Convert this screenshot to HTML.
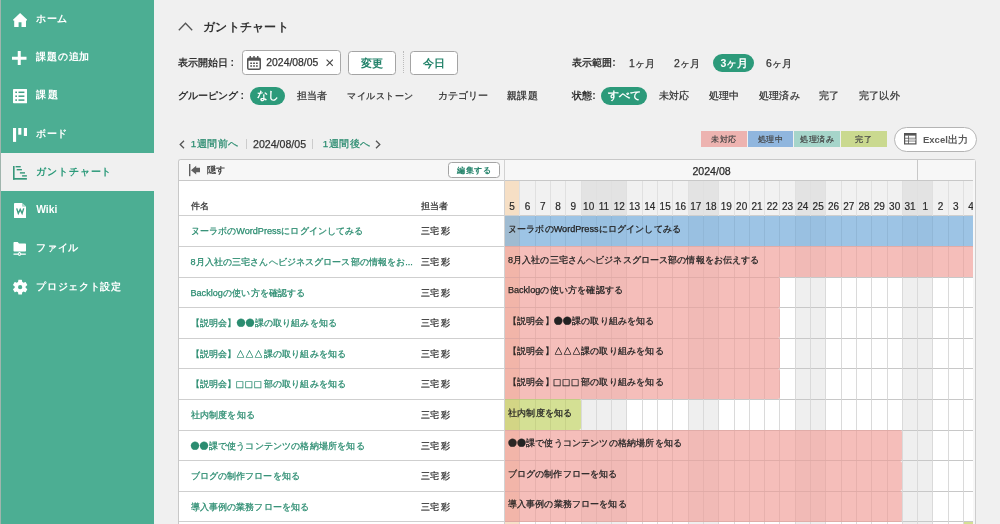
<!DOCTYPE html>
<html lang="ja">
<head>
<meta charset="utf-8">
<title>ガントチャート</title>
<style>
html,body{margin:0;padding:0}
body{width:1000px;height:524px;overflow:hidden;background:#f0f0f0;font-family:"Liberation Sans",sans-serif;position:relative;color:#333;font-size:10px}
div,span,svg{position:absolute;box-sizing:border-box}
#app{left:0;top:0;width:1000px;height:524px;overflow:hidden;will-change:transform}
.t{white-space:nowrap;line-height:20px;height:20px;-webkit-text-stroke:.25px}
.b{font-weight:bold;-webkit-text-stroke:0}
.j{text-align:justify;text-align-last:justify}
#side{left:1px;top:0;width:153px;height:524px;background:#4cae93}
#strip{left:0;top:0;width:1px;height:524px;background:#9fb5ad}
.ni{left:0;width:153px;height:38.25px}
.ni .t{left:35.2px;top:8.9px;color:#fff;font-weight:bold;font-size:10.3px;-webkit-text-stroke:0}
.ni.act{background:#f0f0f0}
.ni.act .t{color:#2c9a7a}
.pill{background:#2c9a7a;color:#fff;border-radius:9px;text-align:justify;text-align-last:justify;font-weight:bold;font-size:10.5px;white-space:nowrap;overflow:hidden}
.btn{background:#fff;border:1px solid #a4a4a4;border-radius:3.5px;text-align:justify;text-align-last:justify;color:#23836a;font-weight:bold;white-space:nowrap;overflow:hidden}
.lg{-webkit-text-stroke:.2px;top:131px;height:15.5px;font-size:8.1px;text-align:justify;text-align-last:justify;line-height:17.5px;color:#444;white-space:nowrap;overflow:hidden}
.row{left:0;width:326px;height:30.6px;border-top:1px solid #cfcfcf}
.row .n{left:11.5px;top:5.2px;color:#2b8c70;font-size:9.1px}
.row .a{left:241.5px;top:5.2px;font-size:9.1px;color:#333;width:30px}
.bar{height:30.5px;border-radius:0 2px 2px 0;overflow:hidden}
.bar .t{left:3.4px;font-size:9.1px;color:#222}
i.w{font-style:normal;display:inline-block;width:9px;text-align:center;line-height:0}
i.d{font-size:19px;vertical-align:-2px;display:inline-flex;justify-content:center}
i.q{font-size:11px;vertical-align:-.6px}
.dn{font-size:10px;text-align:center;color:#2a2a2a;-webkit-text-stroke:.2px;line-height:20px;height:20px}
</style>
</head>
<body>
<div id="app">
<div id="strip"></div>
<div id="side">
<div class="ni" style="top:0px"><svg style="left:11.800px;top:12.850px" width="14.200" height="14.150" viewBox="0 0 28.400 28.300"><path fill="#fff" d="M14.200 0L0 13.400V15H2.400V28.300H11.200V18.300H17V28.300H26V15H28.400V13.400Z"/></svg><span class="t j" style="width:31.3px">ホーム</span></div>
<div class="ni" style="top:38.25px"><svg style="left:11.2px;top:12.40px" width="14.5" height="14.5" viewBox="0 0 29 29"><path fill="#fff" d="M11.5 0h6v11.5h11.5v6h-11.5v11.5h-6v-11.5h-11.5v-6h11.5z"/></svg><span class="t j" style="width:53.1px">課題の追加</span></div>
<div class="ni" style="top:76.5px"><svg style="left:11.900px;top:12.90px" width="14.200" height="14.200" viewBox="0 0 28.400 28.400"><rect x="0" y="0" width="28.400" height="28.400" rx="1.600" fill="#fff"/><g fill="#3f9f84"><rect x="4.600" y="5.100" width="3.400" height="3"/><rect x="11" y="5.100" width="11.800" height="3"/><rect x="4.600" y="12.900" width="3.400" height="3"/><rect x="11" y="12.900" width="11.800" height="3"/><rect x="4.600" y="20.700" width="3.400" height="3"/><rect x="11" y="20.700" width="11.800" height="3"/></g></svg><span class="t j" style="width:21.6px">課題</span></div>
<div class="ni" style="top:114.75px"><svg style="left:11.900px;top:13.20px" width="14.500" height="14" viewBox="0 0 29 28"><g fill="#fff"><rect x="0" y="0" width="6.200" height="27.800"/><rect x="10.500" y="0" width="6.200" height="13.400"/><rect x="21.700" y="0" width="6.400" height="16"/></g></svg><span class="t j" style="width:31.3px">ボード</span></div>
<div class="ni act" style="top:153px"><svg style="left:12.100px;top:13.00px" width="13.900" height="13.700" viewBox="0 0 139 137"><g fill="#35977a"><rect x="0" y="0" width="16" height="137"/><rect x="0" y="120" width="139" height="17"/><rect x="26" y="0" width="51" height="14"/><rect x="37" y="30" width="52" height="14"/><rect x="69" y="62" width="51" height="14"/><rect x="91" y="92" width="48" height="14"/></g></svg><span class="t j" style="width:75.2px">ガントチャート</span></div>
<div class="ni" style="top:191.25px"><svg style="left:12.800px;top:11.45px" width="12.300" height="15.200" viewBox="0 0 123 152"><path fill="#fff" d="M8 0H80L123 38V144a8 8 0 0 1-8 8H8a8 8 0 0 1-8-8V8a8 8 0 0 1 8-8z"/><path fill="#4cae93" d="M80 0V30a8 8 0 0 0 8 8H123z" opacity=".45"/><path fill="none" stroke="#3f9f84" stroke-width="14" stroke-linejoin="miter" d="M27 54L43 104L62 64L81 104L97 54"/></svg><span class="t">Wiki</span></div>
<div class="ni" style="top:229.5px"><svg style="left:12.4px;top:12.80px" width="13" height="14" viewBox="0 0 26 28"><g fill="#fff"><path d="M1 1.5a1.5 1.5 0 0 1 1.500-1.500h7l2.500 3h12.500a1.500 1.500 0 0 1 1.500 1.500v13a1.500 1.500 0 0 1-1.500 1.500h-22a1.500 1.500 0 0 1-1.500-1.500z"/><rect x="1" y="23" width="24.600" height="2.600"/><rect x="11.800" y="20" width="2.400" height="4"/><circle cx="13" cy="24.200" r="3.600"/></g><circle cx="13" cy="24.200" r="1.500" fill="#4cae93"/></svg><span class="t j" style="width:42px">ファイル</span></div>
<div class="ni" style="top:267.75px"><svg style="left:9.600px;top:10.60px" width="18.300" height="18.300" viewBox="0 0 24 24"><path fill="#fff" d="M19.140 12.940c.040-.300.060-.610.060-.940 0-.320-.020-.640-.070-.940l2.030-1.580a.490.490 0 0 0 .120-.610l-1.920-3.320a.488.488 0 0 0-.590-.220l-2.390.960c-.500-.380-1.030-.700-1.620-.940l-.360-2.540a.484.484 0 0 0-.480-.410h-3.840c-.240 0-.430.170-.470.410l-.360 2.540c-.590.240-1.130.570-1.620.940l-2.390-.960c-.220-.080-.470 0-.590.220L2.740 8.870c-.120.210-.08.470.120.610l2.030 1.580c-.050.300-.090.630-.090.940s.2.640.07.940l-2.030 1.580a.490.490 0 0 0-.120.610l1.920 3.320c.12.220.37.290.59.220l2.390-.960c.500.380 1.030.700 1.620.940l.360 2.540c.5.240.24.410.48.410h3.840c.24 0 .44-.170.470-.410l.360-2.540c.590-.240 1.130-.560 1.620-.940l2.390.960c.22.080.47 0 .59-.220l1.920-3.320c.12-.220.070-.470-.120-.610l-2.010-1.580zM12 14.800a2.800 2.800 0 1 1 0-5.600a2.800 2.800 0 0 1 0 5.600z"/></svg><span class="t j" style="width:84.8px">プロジェクト設定</span></div>
</div>
<svg style="left:178px;top:21.5px" width="15" height="9" viewBox="0 0 15 9"><path d="M0.800 8.200L7.500 1.200L14.200 8.200" fill="none" stroke="#555" stroke-width="1.300"/></svg>
<span class="t b j" style="left:203.2px;top:16.5px;width:85.5px;font-size:12.1px;color:#333;">ガントチャート</span>
<span class="t b j" style="left:177.7px;top:53px;width:56px;font-size:10.4px;color:#333;">表示開始日 :</span>
<div style="left:241.500px;top:50px;width:99px;height:24.500px;background:#fff;border:1px solid #a8a8a8;border-radius:3.500px"></div>
<svg style="left:247px;top:55.500px" width="14" height="14" viewBox="0 0 28 28"><g fill="#555"><rect x="5" y="0" width="3" height="6"/><rect x="12.500" y="0" width="3" height="6"/><rect x="20" y="0" width="3" height="6"/></g><rect x="1.500" y="4.500" width="25" height="22" rx="2.500" fill="none" stroke="#555" stroke-width="3"/><rect x="1.500" y="4.500" width="25" height="5" fill="#555"/><g fill="#555"><rect x="6.500" y="13" width="3.600" height="3"/><rect x="12.200" y="13" width="3.600" height="3"/><rect x="17.900" y="13" width="3.600" height="3"/><rect x="6.500" y="18.500" width="3.600" height="3"/><rect x="12.200" y="18.500" width="3.600" height="3"/><rect x="17.900" y="18.500" width="3.600" height="3"/></g></svg>
<span class="t" style="left:266.3px;top:53px;font-size:10.4px;color:#333;">2024/08/05</span>
<svg style="left:326px;top:59.300px" width="7.400" height="7.400" viewBox="0 0 10 10"><path d="M0.800 0.800L9.200 9.200M9.200 0.800L0.800 9.200" stroke="#444" stroke-width="1.500" fill="none"/></svg>
<div class="btn" style="left:348px;top:50.500px;width:47.500px;height:24px;line-height:22px;font-size:10.600px;padding:0 11.600px">変更</div>
<div style="left:402.500px;top:51px;width:0;height:22px;border-left:1px dotted #bbb"></div>
<div class="btn" style="left:410px;top:50.500px;width:47.500px;height:24px;line-height:22px;font-size:10.600px;padding:0 11.600px">今日</div>
<span class="t b j" style="left:572.3px;top:53px;width:43.2px;font-size:10.4px;color:#333;">表示範囲:</span>
<span class="t j" style="left:629px;top:53.8px;width:25px;font-size:10.4px;color:#333;">1ヶ月</span>
<span class="t j" style="left:674px;top:53.8px;width:26px;font-size:10.4px;color:#333;">2ヶ月</span>
<div class="pill" style="left:712.700px;top:54px;width:41.500px;height:18px;line-height:18px;padding:0 7.800px">3ヶ月</div>
<span class="t j" style="left:766px;top:53.8px;width:26px;font-size:10.4px;color:#333;">6ヶ月</span>
<span class="t b j" style="left:177.7px;top:85.5px;width:65px;font-size:10.4px;color:#333;">グルーピング :</span>
<div class="pill" style="left:249.500px;top:87px;width:35px;height:17.500px;line-height:17.500px;padding:0 7.300px">なし</div>
<span class="t j" style="left:297px;top:85.5px;width:29.6px;font-size:10px;color:#333;">担当者</span>
<span class="t j" style="left:347.3px;top:85.5px;width:66.2px;font-size:9.4px;color:#333;">マイルストーン</span>
<span class="t j" style="left:437.5px;top:85.5px;width:49px;font-size:9.6px;color:#333;">カテゴリー</span>
<span class="t j" style="left:506.5px;top:85.5px;width:31px;font-size:10px;color:#333;">親課題</span>
<span class="t b j" style="left:572.3px;top:85.5px;width:23.2px;font-size:10.4px;color:#333;">状態:</span>
<div class="pill" style="left:601px;top:87px;width:46px;height:17.500px;line-height:17.500px;padding:0 7.300px">すべて</div>
<span class="t j" style="left:658.8px;top:85.5px;width:30.6px;font-size:10px;color:#333;">未対応</span>
<span class="t j" style="left:708.6px;top:85.5px;width:30.6px;font-size:10px;color:#333;">処理中</span>
<span class="t j" style="left:759px;top:85.5px;width:40.6px;font-size:10px;color:#333;">処理済み</span>
<span class="t j" style="left:819.2px;top:85.5px;width:19.6px;font-size:10px;color:#333;">完了</span>
<span class="t j" style="left:859.2px;top:85.5px;width:40.4px;font-size:10px;color:#333;">完了以外</span>
<svg style="left:178.500px;top:140px" width="6" height="9" viewBox="0 0 6 9"><path d="M5 0.800L1.200 4.500L5 8.200" fill="none" stroke="#555" stroke-width="1.300"/></svg>
<span class="t j" style="left:190.7px;top:134px;width:47.6px;font-size:9.8px;color:#2b8c70;">1週間前へ</span>
<div style="left:245.500px;top:139px;width:1px;height:10px;background:#ccc"></div>
<span class="t" style="left:253px;top:134px;font-size:10.6px;color:#333;">2024/08/05</span>
<div style="left:311.500px;top:139px;width:1px;height:10px;background:#ccc"></div>
<span class="t j" style="left:322.7px;top:134px;width:47.6px;font-size:9.8px;color:#2b8c70;">1週間後へ</span>
<svg style="left:374.500px;top:140px" width="6" height="9" viewBox="0 0 6 9"><path d="M1 0.800L4.800 4.500L1 8.200" fill="none" stroke="#555" stroke-width="1.300"/></svg>
<div class="lg" style="left:700.5px;width:46px;background:#edb3b0;padding:0 10.3px">未対応</div>
<div class="lg" style="left:747.5px;width:45.5px;background:#90b6de;padding:0 10px">処理中</div>
<div class="lg" style="left:794px;width:46px;background:#a6d5ca;padding:0 6.2px">処理済み</div>
<div class="lg" style="left:841px;width:45.5px;background:#cad98f;padding:0 14.4px">完了</div>
<div style="left:894px;top:127px;width:82.500px;height:24.500px;background:#fff;border:1px solid #b4b4b4;border-radius:12.500px"></div>
<svg style="left:904px;top:133px" width="12.500" height="11.500" viewBox="0 0 25 23"><rect x="1.200" y="1.200" width="22.600" height="20.600" fill="#fff" stroke="#555" stroke-width="2.400"/><rect x="1.200" y="1.200" width="22.600" height="4" fill="#555"/><path d="M1 10.500h23M1 16h23M9 5v17" stroke="#555" stroke-width="1.600" fill="none"/><rect x="9.800" y="11.300" width="13" height="4" fill="#ccc"/></svg>
<span class="t b j" style="left:923px;top:129.5px;width:43.5px;font-size:9.5px;color:#5a5a5a;">Excel出力</span>
<div id="lt" style="left:178px;top:159px;width:326.5px;height:380px;background:#fff;border:1px solid #c8c8c8;border-right:none;border-radius:3px 0 0 0;overflow:hidden">
<div style="left:0;top:0;width:326px;height:21px;background:#f7f7f7;border-bottom:1px solid #c8c8c8"></div>
<svg style="left:9.8px;top:4.4px" width="11.2" height="12.2" viewBox="0 0 112 122"><rect x="0" y="0" width="14" height="122" fill="#606060"/><path d="M20 62L72 17.6V37.6H112V83H72V104Z" fill="#606060"/></svg>
<span class="t j" style="left:28.3px;top:-0.2px;width:18px;font-size:9px;color:#333">隠す</span>
<div class="btn" style="left:269px;top:2px;width:52px;height:16px;line-height:14px;font-size:8.300px;padding:0 8.200px">編集する</div>
<span class="t j" style="left:11.5px;top:36.3px;width:18px;font-size:9.100px;color:#333">件名</span>
<span class="t j" style="left:241.5px;top:36.3px;width:27px;font-size:9.100px;color:#333">担当者</span>
<div class="row" style="top:55.3px"><span class="t n j" style="width:173px">ヌーラボのWordPressにログインしてみる</span><span class="t a j">三宅 彩</span></div>
<div class="row" style="top:85.9px"><span class="t n j" style="width:222.3px">8月入社の三宅さんへビジネスグロース部の情報をお...</span><span class="t a j">三宅 彩</span></div>
<div class="row" style="top:116.5px"><span class="t n j" style="width:115px">Backlogの使い方を確認する</span><span class="t a j">三宅 彩</span></div>
<div class="row" style="top:147.1px"><span class="t n j" style="width:146.5px">【説明会】<i class="w d">●</i><i class="w d">●</i>課の取り組みを知る</span><span class="t a j">三宅 彩</span></div>
<div class="row" style="top:177.7px"><span class="t n j" style="width:155.7px">【説明会】<i class="w">△</i><i class="w">△</i><i class="w">△</i>課の取り組みを知る</span><span class="t a j">三宅 彩</span></div>
<div class="row" style="top:208.3px"><span class="t n j" style="width:155.7px">【説明会】<i class="w q">□</i><i class="w q">□</i><i class="w q">□</i>部の取り組みを知る</span><span class="t a j">三宅 彩</span></div>
<div class="row" style="top:238.9px"><span class="t n j" style="width:64.3px">社内制度を知る</span><span class="t a j">三宅 彩</span></div>
<div class="row" style="top:269.5px"><span class="t n j" style="width:174px"><i class="w d">●</i><i class="w d">●</i>課で使うコンテンツの格納場所を知る</span><span class="t a j">三宅 彩</span></div>
<div class="row" style="top:300.1px"><span class="t n j" style="width:109.3px">ブログの制作フローを知る</span><span class="t a j">三宅 彩</span></div>
<div class="row" style="top:330.7px"><span class="t n j" style="width:118.7px">導入事例の業務フローを知る</span><span class="t a j">三宅 彩</span></div>
<div class="row" style="top:361.3px"></div>
</div>
<div id="g" style="left:504.5px;top:159px;width:471.5px;height:380px;background:#fff;overflow:hidden;border-top:1px solid #c8c8c8;border-radius:0 3px 0 0">
<div style="left:0;top:0;width:471.5px;height:21px;background:#f7f7f7;border-bottom:1px solid #c8c8c8"></div>
<div style="left:412.6px;top:0;width:1px;height:20px;background:#c8c8c8"></div>
<span class="t" style="left:177.05px;top:0.5px;width:60px;text-align:center;font-size:10.600px;color:#2a2a2a">2024/08</span>
<div style="left:0px;top:21px;width:15.4px;height:34.8px;background:#f6dfc5"></div>
<div style="left:0px;top:55.8px;width:15.4px;height:340px;background:#f9e6d0"></div>
<span class="dn" style="left:-3px;top:37.1px;width:21.3px">5</span>
<div style="left:15.3px;top:21px;width:15.4px;height:34.8px;background:#f1f1f1"></div>
<span class="dn" style="left:12.3px;top:37.1px;width:21.3px">6</span>
<div style="left:30.6px;top:21px;width:15.4px;height:34.8px;background:#f1f1f1"></div>
<span class="dn" style="left:27.6px;top:37.1px;width:21.3px">7</span>
<div style="left:45.9px;top:21px;width:15.4px;height:34.8px;background:#f1f1f1"></div>
<span class="dn" style="left:42.9px;top:37.1px;width:21.3px">8</span>
<div style="left:61.2px;top:21px;width:15.4px;height:34.8px;background:#f1f1f1"></div>
<span class="dn" style="left:58.2px;top:37.1px;width:21.3px">9</span>
<div style="left:76.5px;top:21px;width:15.4px;height:34.8px;background:#e3e3e3"></div>
<div style="left:76.5px;top:55.8px;width:15.4px;height:340px;background:#efefef"></div>
<span class="dn" style="left:73.5px;top:37.1px;width:21.3px">10</span>
<div style="left:91.8px;top:21px;width:15.4px;height:34.8px;background:#e3e3e3"></div>
<div style="left:91.8px;top:55.8px;width:15.4px;height:340px;background:#efefef"></div>
<span class="dn" style="left:88.8px;top:37.1px;width:21.3px">11</span>
<div style="left:107.1px;top:21px;width:15.4px;height:34.8px;background:#e3e3e3"></div>
<div style="left:107.1px;top:55.8px;width:15.4px;height:340px;background:#efefef"></div>
<span class="dn" style="left:104.1px;top:37.1px;width:21.3px">12</span>
<div style="left:122.4px;top:21px;width:15.4px;height:34.8px;background:#f1f1f1"></div>
<span class="dn" style="left:119.4px;top:37.1px;width:21.3px">13</span>
<div style="left:137.7px;top:21px;width:15.4px;height:34.8px;background:#f1f1f1"></div>
<span class="dn" style="left:134.7px;top:37.1px;width:21.3px">14</span>
<div style="left:153px;top:21px;width:15.4px;height:34.8px;background:#f1f1f1"></div>
<span class="dn" style="left:150px;top:37.1px;width:21.3px">15</span>
<div style="left:168.3px;top:21px;width:15.4px;height:34.8px;background:#f1f1f1"></div>
<span class="dn" style="left:165.3px;top:37.1px;width:21.3px">16</span>
<div style="left:183.6px;top:21px;width:15.4px;height:34.8px;background:#e3e3e3"></div>
<div style="left:183.6px;top:55.8px;width:15.4px;height:340px;background:#efefef"></div>
<span class="dn" style="left:180.6px;top:37.1px;width:21.3px">17</span>
<div style="left:198.9px;top:21px;width:15.4px;height:34.8px;background:#e3e3e3"></div>
<div style="left:198.9px;top:55.8px;width:15.4px;height:340px;background:#efefef"></div>
<span class="dn" style="left:195.9px;top:37.1px;width:21.3px">18</span>
<div style="left:214.2px;top:21px;width:15.4px;height:34.8px;background:#f1f1f1"></div>
<span class="dn" style="left:211.2px;top:37.1px;width:21.3px">19</span>
<div style="left:229.5px;top:21px;width:15.4px;height:34.8px;background:#f1f1f1"></div>
<span class="dn" style="left:226.5px;top:37.1px;width:21.3px">20</span>
<div style="left:244.8px;top:21px;width:15.4px;height:34.8px;background:#f1f1f1"></div>
<span class="dn" style="left:241.8px;top:37.1px;width:21.3px">21</span>
<div style="left:260.1px;top:21px;width:15.4px;height:34.8px;background:#f1f1f1"></div>
<span class="dn" style="left:257.1px;top:37.1px;width:21.3px">22</span>
<div style="left:275.4px;top:21px;width:15.4px;height:34.8px;background:#f1f1f1"></div>
<span class="dn" style="left:272.4px;top:37.1px;width:21.3px">23</span>
<div style="left:290.7px;top:21px;width:15.4px;height:34.8px;background:#e3e3e3"></div>
<div style="left:290.7px;top:55.8px;width:15.4px;height:340px;background:#efefef"></div>
<span class="dn" style="left:287.7px;top:37.1px;width:21.3px">24</span>
<div style="left:306px;top:21px;width:15.4px;height:34.8px;background:#e3e3e3"></div>
<div style="left:306px;top:55.8px;width:15.4px;height:340px;background:#efefef"></div>
<span class="dn" style="left:303px;top:37.1px;width:21.3px">25</span>
<div style="left:321.3px;top:21px;width:15.4px;height:34.8px;background:#f1f1f1"></div>
<span class="dn" style="left:318.3px;top:37.1px;width:21.3px">26</span>
<div style="left:336.6px;top:21px;width:15.4px;height:34.8px;background:#f1f1f1"></div>
<span class="dn" style="left:333.6px;top:37.1px;width:21.3px">27</span>
<div style="left:351.9px;top:21px;width:15.4px;height:34.8px;background:#f1f1f1"></div>
<span class="dn" style="left:348.9px;top:37.1px;width:21.3px">28</span>
<div style="left:367.2px;top:21px;width:15.4px;height:34.8px;background:#f1f1f1"></div>
<span class="dn" style="left:364.2px;top:37.1px;width:21.3px">29</span>
<div style="left:382.5px;top:21px;width:15.4px;height:34.8px;background:#f1f1f1"></div>
<span class="dn" style="left:379.5px;top:37.1px;width:21.3px">30</span>
<div style="left:397.8px;top:21px;width:15.4px;height:34.8px;background:#e3e3e3"></div>
<div style="left:397.8px;top:55.8px;width:15.4px;height:340px;background:#efefef"></div>
<span class="dn" style="left:394.8px;top:37.1px;width:21.3px">31</span>
<div style="left:413.1px;top:21px;width:15.4px;height:34.8px;background:#e3e3e3"></div>
<div style="left:413.1px;top:55.8px;width:15.4px;height:340px;background:#efefef"></div>
<span class="dn" style="left:410.1px;top:37.1px;width:21.3px">1</span>
<div style="left:428.4px;top:21px;width:15.4px;height:34.8px;background:#f1f1f1"></div>
<span class="dn" style="left:425.4px;top:37.1px;width:21.3px">2</span>
<div style="left:443.7px;top:21px;width:15.4px;height:34.8px;background:#f1f1f1"></div>
<span class="dn" style="left:440.7px;top:37.1px;width:21.3px">3</span>
<div style="left:459px;top:21px;width:15.4px;height:34.8px;background:#f1f1f1"></div>
<span class="dn" style="left:456px;top:37.1px;width:21.3px">4</span>
<div style="left:0;top:55.3px;width:468.5px;height:1px;background:#cfcfcf"></div>
<div style="left:0;top:85.9px;width:468.5px;height:1px;background:#cfcfcf"></div>
<div style="left:0;top:116.5px;width:468.5px;height:1px;background:#cfcfcf"></div>
<div style="left:0;top:147.1px;width:468.5px;height:1px;background:#cfcfcf"></div>
<div style="left:0;top:177.7px;width:468.5px;height:1px;background:#cfcfcf"></div>
<div style="left:0;top:208.3px;width:468.5px;height:1px;background:#cfcfcf"></div>
<div style="left:0;top:238.9px;width:468.5px;height:1px;background:#cfcfcf"></div>
<div style="left:0;top:269.5px;width:468.5px;height:1px;background:#cfcfcf"></div>
<div style="left:0;top:300.1px;width:468.5px;height:1px;background:#cfcfcf"></div>
<div style="left:0;top:330.7px;width:468.5px;height:1px;background:#cfcfcf"></div>
<div style="left:0;top:361.3px;width:468.5px;height:1px;background:#cfcfcf"></div>
<div style="left:0;top:391.9px;width:468.5px;height:1px;background:#cfcfcf"></div>
<div style="left:14.8px;top:21px;width:1px;height:360px;background:#e0e0e0"></div>
<div style="left:30.1px;top:21px;width:1px;height:360px;background:#e0e0e0"></div>
<div style="left:45.4px;top:21px;width:1px;height:360px;background:#e0e0e0"></div>
<div style="left:60.7px;top:21px;width:1px;height:360px;background:#e0e0e0"></div>
<div style="left:76px;top:21px;width:1px;height:360px;background:#e0e0e0"></div>
<div style="left:91.3px;top:21px;width:1px;height:360px;background:#e0e0e0"></div>
<div style="left:106.6px;top:21px;width:1px;height:360px;background:#e0e0e0"></div>
<div style="left:121.9px;top:21px;width:1px;height:360px;background:#e0e0e0"></div>
<div style="left:137.2px;top:21px;width:1px;height:360px;background:#e0e0e0"></div>
<div style="left:152.5px;top:21px;width:1px;height:360px;background:#e0e0e0"></div>
<div style="left:167.8px;top:21px;width:1px;height:360px;background:#e0e0e0"></div>
<div style="left:183.1px;top:21px;width:1px;height:360px;background:#e0e0e0"></div>
<div style="left:198.4px;top:21px;width:1px;height:360px;background:#e0e0e0"></div>
<div style="left:213.7px;top:21px;width:1px;height:360px;background:#e0e0e0"></div>
<div style="left:229px;top:21px;width:1px;height:360px;background:#e0e0e0"></div>
<div style="left:244.3px;top:21px;width:1px;height:360px;background:#e0e0e0"></div>
<div style="left:259.6px;top:21px;width:1px;height:360px;background:#e0e0e0"></div>
<div style="left:274.9px;top:21px;width:1px;height:360px;background:#e0e0e0"></div>
<div style="left:290.2px;top:21px;width:1px;height:360px;background:#e0e0e0"></div>
<div style="left:305.5px;top:21px;width:1px;height:360px;background:#e0e0e0"></div>
<div style="left:320.8px;top:21px;width:1px;height:360px;background:#e0e0e0"></div>
<div style="left:336.1px;top:21px;width:1px;height:360px;background:#e0e0e0"></div>
<div style="left:351.4px;top:21px;width:1px;height:360px;background:#e0e0e0"></div>
<div style="left:366.7px;top:21px;width:1px;height:360px;background:#e0e0e0"></div>
<div style="left:382px;top:21px;width:1px;height:360px;background:#e0e0e0"></div>
<div style="left:397.3px;top:21px;width:1px;height:360px;background:#e0e0e0"></div>
<div style="left:412.6px;top:21px;width:1px;height:360px;background:#e0e0e0"></div>
<div style="left:427.9px;top:21px;width:1px;height:360px;background:#e0e0e0"></div>
<div style="left:443.2px;top:21px;width:1px;height:360px;background:#e0e0e0"></div>
<div style="left:458.5px;top:21px;width:1px;height:360px;background:#e0e0e0"></div>
<div class="bar" style="left:0;top:55.8px;width:474.3px;height:30.6px;background:rgba(124,176,220,.75)"><span class="t j" style="top:3.2px;width:173px">ヌーラボのWordPressにログインしてみる</span></div>
<div class="bar" style="left:0;top:86.4px;width:474.3px;height:30.6px;background:rgba(242,168,163,.75)"><span class="t j" style="top:3.2px;width:251.5px">8月入社の三宅さんへビジネスグロース部の情報をお伝えする</span></div>
<div class="bar" style="left:0;top:117px;width:275.4px;height:30.6px;background:rgba(242,168,163,.75)"><span class="t j" style="top:3.2px;width:115px">Backlogの使い方を確認する</span></div>
<div class="bar" style="left:0;top:147.6px;width:275.4px;height:30.6px;background:rgba(242,168,163,.75)"><span class="t j" style="top:3.2px;width:146.5px">【説明会】<i class="w d">●</i><i class="w d">●</i>課の取り組みを知る</span></div>
<div class="bar" style="left:0;top:178.2px;width:275.4px;height:30.6px;background:rgba(242,168,163,.75)"><span class="t j" style="top:3.2px;width:155.7px">【説明会】<i class="w">△</i><i class="w">△</i><i class="w">△</i>課の取り組みを知る</span></div>
<div class="bar" style="left:0;top:208.8px;width:275.4px;height:30.6px;background:rgba(242,168,163,.75)"><span class="t j" style="top:3.2px;width:155.7px">【説明会】<i class="w q">□</i><i class="w q">□</i><i class="w q">□</i>部の取り組みを知る</span></div>
<div class="bar" style="left:0;top:239.4px;width:76.5px;height:30.6px;background:rgba(197,213,112,.75)"><span class="t j" style="top:3.2px;width:64.3px">社内制度を知る</span></div>
<div class="bar" style="left:0;top:270px;width:397.8px;height:30.6px;background:rgba(242,168,163,.75)"><span class="t j" style="top:3.2px;width:174px"><i class="w d">●</i><i class="w d">●</i>課で使うコンテンツの格納場所を知る</span></div>
<div class="bar" style="left:0;top:300.6px;width:397.8px;height:30.6px;background:rgba(242,168,163,.75)"><span class="t j" style="top:3.2px;width:109.3px">ブログの制作フローを知る</span></div>
<div class="bar" style="left:0;top:331.2px;width:397.8px;height:30.6px;background:rgba(242,168,163,.75)"><span class="t j" style="top:3.2px;width:118.7px">導入事例の業務フローを知る</span></div>
<div class="bar" style="left:459px;top:362.3px;width:40px;background:rgba(197,213,112,.75)"></div>
<div style="left:0;top:55.8px;width:15.3px;height:340px;background:rgba(225,140,70,.05)"></div>
<div style="left:14.8px;top:55.8px;width:1px;height:320px;background:rgba(0,0,0,.025)"></div>
<div style="left:30.1px;top:55.8px;width:1px;height:320px;background:rgba(0,0,0,.025)"></div>
<div style="left:45.4px;top:55.8px;width:1px;height:320px;background:rgba(0,0,0,.025)"></div>
<div style="left:60.7px;top:55.8px;width:1px;height:320px;background:rgba(0,0,0,.025)"></div>
<div style="left:76px;top:55.8px;width:1px;height:320px;background:rgba(0,0,0,.025)"></div>
<div style="left:91.3px;top:55.8px;width:1px;height:320px;background:rgba(0,0,0,.025)"></div>
<div style="left:106.6px;top:55.8px;width:1px;height:320px;background:rgba(0,0,0,.025)"></div>
<div style="left:121.9px;top:55.8px;width:1px;height:320px;background:rgba(0,0,0,.025)"></div>
<div style="left:137.2px;top:55.8px;width:1px;height:320px;background:rgba(0,0,0,.025)"></div>
<div style="left:152.5px;top:55.8px;width:1px;height:320px;background:rgba(0,0,0,.025)"></div>
<div style="left:167.8px;top:55.8px;width:1px;height:320px;background:rgba(0,0,0,.025)"></div>
<div style="left:183.1px;top:55.8px;width:1px;height:320px;background:rgba(0,0,0,.025)"></div>
<div style="left:198.4px;top:55.8px;width:1px;height:320px;background:rgba(0,0,0,.025)"></div>
<div style="left:213.7px;top:55.8px;width:1px;height:320px;background:rgba(0,0,0,.025)"></div>
<div style="left:229px;top:55.8px;width:1px;height:320px;background:rgba(0,0,0,.025)"></div>
<div style="left:244.3px;top:55.8px;width:1px;height:320px;background:rgba(0,0,0,.025)"></div>
<div style="left:259.6px;top:55.8px;width:1px;height:320px;background:rgba(0,0,0,.025)"></div>
<div style="left:274.9px;top:55.8px;width:1px;height:320px;background:rgba(0,0,0,.025)"></div>
<div style="left:290.2px;top:55.8px;width:1px;height:320px;background:rgba(0,0,0,.025)"></div>
<div style="left:305.5px;top:55.8px;width:1px;height:320px;background:rgba(0,0,0,.025)"></div>
<div style="left:320.8px;top:55.8px;width:1px;height:320px;background:rgba(0,0,0,.025)"></div>
<div style="left:336.1px;top:55.8px;width:1px;height:320px;background:rgba(0,0,0,.025)"></div>
<div style="left:351.4px;top:55.8px;width:1px;height:320px;background:rgba(0,0,0,.025)"></div>
<div style="left:366.7px;top:55.8px;width:1px;height:320px;background:rgba(0,0,0,.025)"></div>
<div style="left:382px;top:55.8px;width:1px;height:320px;background:rgba(0,0,0,.025)"></div>
<div style="left:397.3px;top:55.8px;width:1px;height:320px;background:rgba(0,0,0,.025)"></div>
<div style="left:412.6px;top:55.8px;width:1px;height:320px;background:rgba(0,0,0,.025)"></div>
<div style="left:427.9px;top:55.8px;width:1px;height:320px;background:rgba(0,0,0,.025)"></div>
<div style="left:443.2px;top:55.8px;width:1px;height:320px;background:rgba(0,0,0,.025)"></div>
<div style="left:458.5px;top:55.8px;width:1px;height:320px;background:rgba(0,0,0,.025)"></div>
<div style="left:0;top:85.9px;width:468.5px;height:1px;background:rgba(0,0,0,.03)"></div>
<div style="left:0;top:116.5px;width:468.5px;height:1px;background:rgba(0,0,0,.03)"></div>
<div style="left:0;top:147.1px;width:468.5px;height:1px;background:rgba(0,0,0,.03)"></div>
<div style="left:0;top:177.7px;width:468.5px;height:1px;background:rgba(0,0,0,.03)"></div>
<div style="left:0;top:208.3px;width:468.5px;height:1px;background:rgba(0,0,0,.03)"></div>
<div style="left:0;top:238.9px;width:468.5px;height:1px;background:rgba(0,0,0,.03)"></div>
<div style="left:0;top:269.5px;width:468.5px;height:1px;background:rgba(0,0,0,.03)"></div>
<div style="left:0;top:300.1px;width:468.5px;height:1px;background:rgba(0,0,0,.03)"></div>
<div style="left:0;top:330.7px;width:468.5px;height:1px;background:rgba(0,0,0,.03)"></div>
<div style="left:0;top:361.3px;width:468.5px;height:1px;background:rgba(0,0,0,.03)"></div>
<div style="left:468.5px;top:0;width:3px;height:380px;background:#f7f7f7;border-right:1px solid #cdcdcd"></div>
</div>
<div style="left:504px;top:160px;width:1px;height:370px;background:#d2d2d2"></div>
</div>
</body>
</html>
